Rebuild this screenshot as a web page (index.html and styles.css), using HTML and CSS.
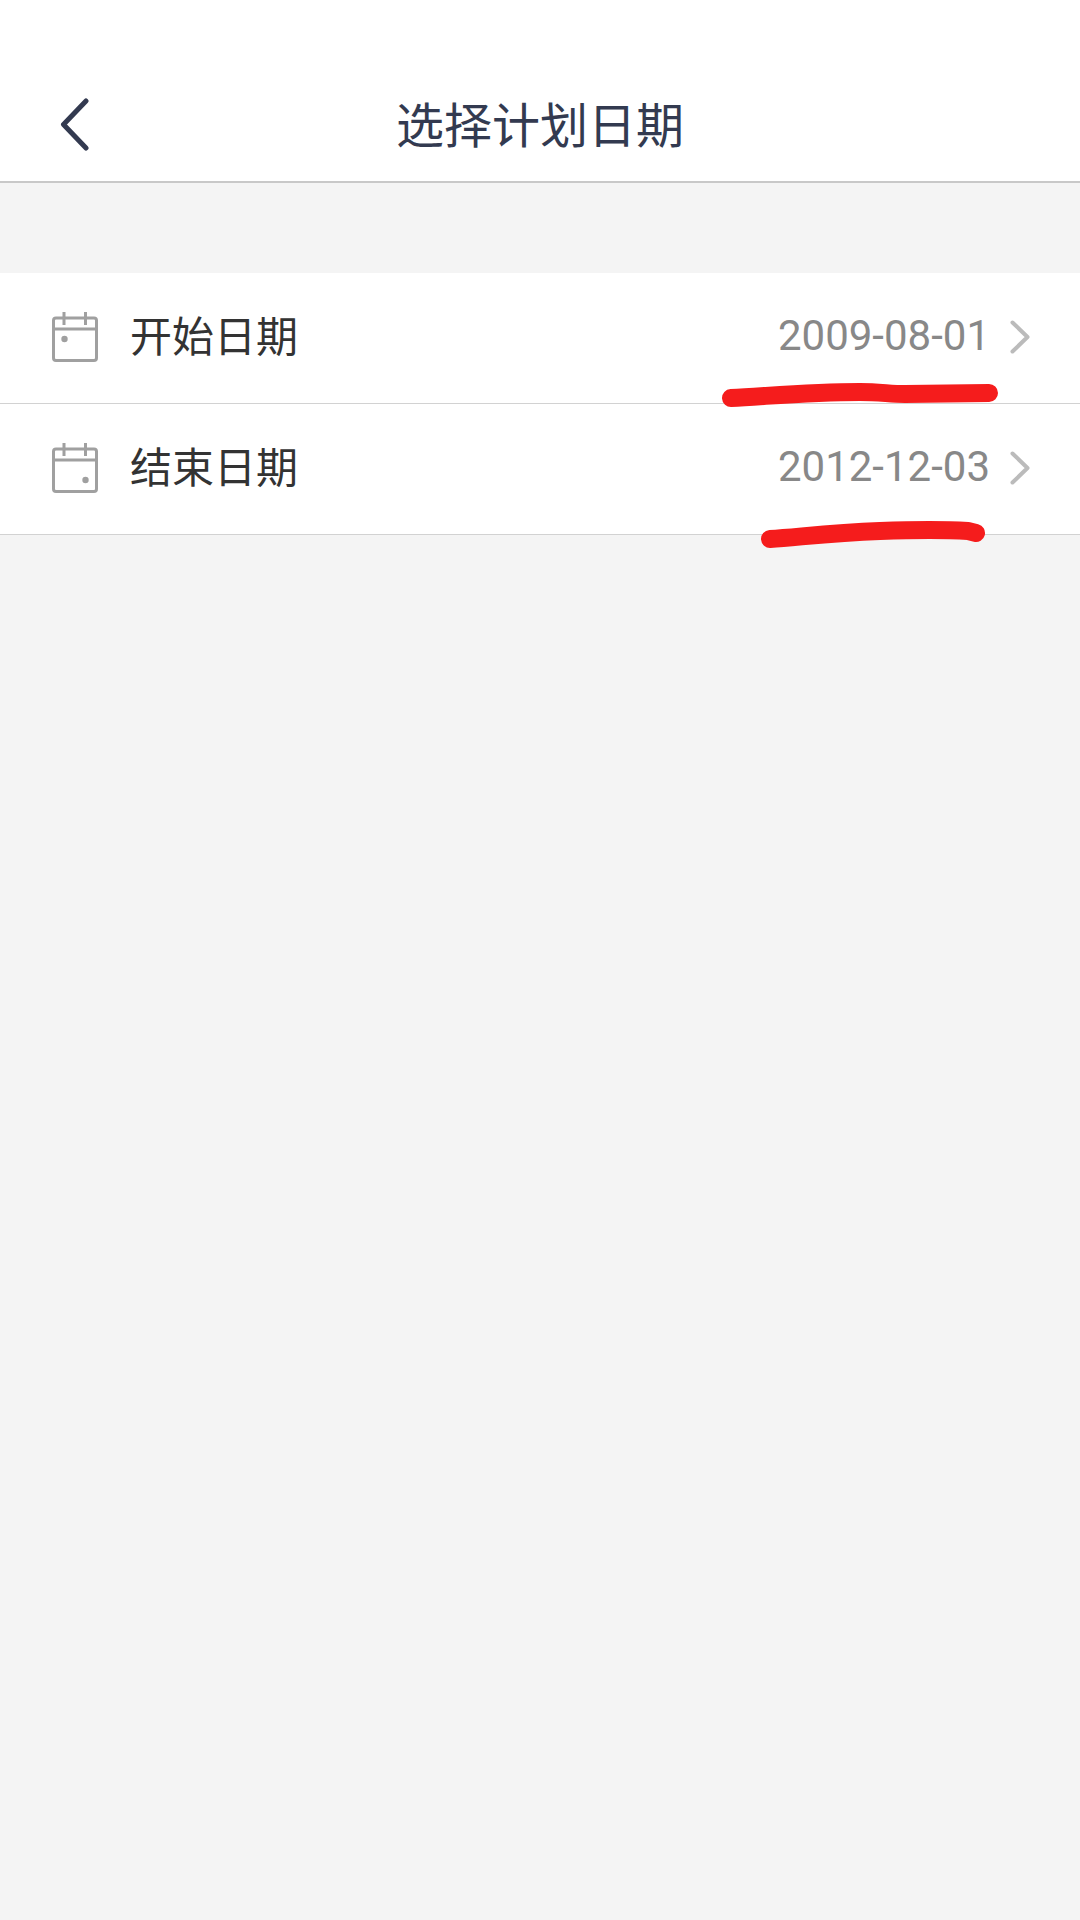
FILE: index.html
```html
<!DOCTYPE html>
<html>
<head>
  <meta charset="UTF-8">
  <meta name="viewport" content="width=device-width, initial-scale=1.0">
  <title>选择计划日期</title>
  <link rel="stylesheet" href="styles.css">
</head>
<body>
  <div class="page">
    <header class="top-bar">
      <svg class="back-icon" width="30" height="54" viewBox="0 0 30 54">
        <path d="M26 3 L3.5 26.5 L26 50" />
      </svg>
      <h1 class="title">选择计划日期</h1>
    </header>

    <div class="date-list">
      <div class="date-row">
        <svg class="cal-icon" width="46" height="50" viewBox="0 0 46 50">
          <rect x="1.5" y="6" width="43" height="42.5" rx="2.5" />
          <path d="M1.5 17 H44.5 M12 0 V13 M33.5 0 V13" />
          <circle cx="12.5" cy="27" r="3.2" />
        </svg>
        <span class="date-label">开始日期</span>
        <span class="date-value">2009-08-01</span>
        <svg class="chevron" width="20" height="34" viewBox="0 0 20 34">
          <path d="M2.5 2.5 L17.5 17 L2.5 31.5" />
        </svg>
      </div>
      <div class="date-row">
        <svg class="cal-icon" width="46" height="50" viewBox="0 0 46 50">
          <rect x="1.5" y="6" width="43" height="42.5" rx="2.5" />
          <path d="M1.5 17 H44.5 M12 0 V13 M33.5 0 V13" />
          <circle cx="33.5" cy="37" r="3.2" />
        </svg>
        <span class="date-label">结束日期</span>
        <span class="date-value">2012-12-03</span>
        <svg class="chevron" width="20" height="34" viewBox="0 0 20 34">
          <path d="M2.5 2.5 L17.5 17 L2.5 31.5" />
        </svg>
      </div>
    </div>

    <!-- hand drawn marks on top of the screenshot -->
    <svg class="marks" width="1080" height="560" viewBox="0 0 1080 560">
      <path d="M731 398 C770 396 810 392 860 392 C880 392 890 394 905 394 L989 393" />
      <path d="M770 539 C800 537 830 533 880 531 C910 530 950 530 968 531 L976 533" />
    </svg>
  </div>
</body>
</html>
```

FILE: styles.css
```css
* {
  box-sizing: border-box;
}
html, body {
  margin: 0;
  padding: 0;
}
body {
  font-family: "Roboto", "Noto Sans CJK SC", sans-serif;
  background-color: #f4f4f4;
}
.page {
  position: relative;
  width: 1080px;
  height: 1920px;
  overflow: hidden;
}
.top-bar {
  position: relative;
  height: 183px;
  padding-top: 68px;
  display: flex;
  justify-content: center;
  background-color: #fff;
  border-bottom: 2px solid #c8c8c8;
}
.title {
  margin: 0;
  font-size: 48px;
  font-weight: 400;
  line-height: 108px;
  color: #333a50;
  font-family: "Noto Sans CJK SC", sans-serif;
}
.back-icon {
  position: absolute;
  left: 60px;
  top: 98px;
}
.back-icon path {
  fill: none;
  stroke: #333a50;
  stroke-width: 5;
  stroke-linecap: round;
  stroke-linejoin: round;
}
.date-list {
  margin-top: 90px;
  background-color: #fff;
}
.date-row {
  display: flex;
  align-items: center;
  height: 131px;
  padding: 0 50px 0 52px;
  border-bottom: 1px solid #d2d2d2;
}
.cal-icon {
  flex: none;
  margin-top: -3px;
}
.cal-icon rect,
.cal-icon path {
  fill: none;
  stroke: #a0a0a0;
  stroke-width: 3;
}
.cal-icon circle {
  fill: #a0a0a0;
}
.date-label {
  margin-left: 32px;
  font-size: 42px;
  color: #333;
  font-family: "Noto Sans CJK SC", sans-serif;
  position: relative;
  top: -5px;
}
.date-value {
  margin-left: auto;
  font-size: 42px;
  color: #888;
  position: relative;
  top: -3px;
}
.chevron {
  flex: none;
  margin-left: 20px;
  margin-top: -3px;
}
.chevron path {
  fill: none;
  stroke: #bbb;
  stroke-width: 4;
  stroke-linecap: round;
  stroke-linejoin: round;
}
.marks {
  position: absolute;
  left: 0;
  top: 0;
}
.marks path {
  fill: none;
  stroke: #f51c1c;
  stroke-width: 18;
  stroke-linecap: round;
  stroke-linejoin: round;
}
```
